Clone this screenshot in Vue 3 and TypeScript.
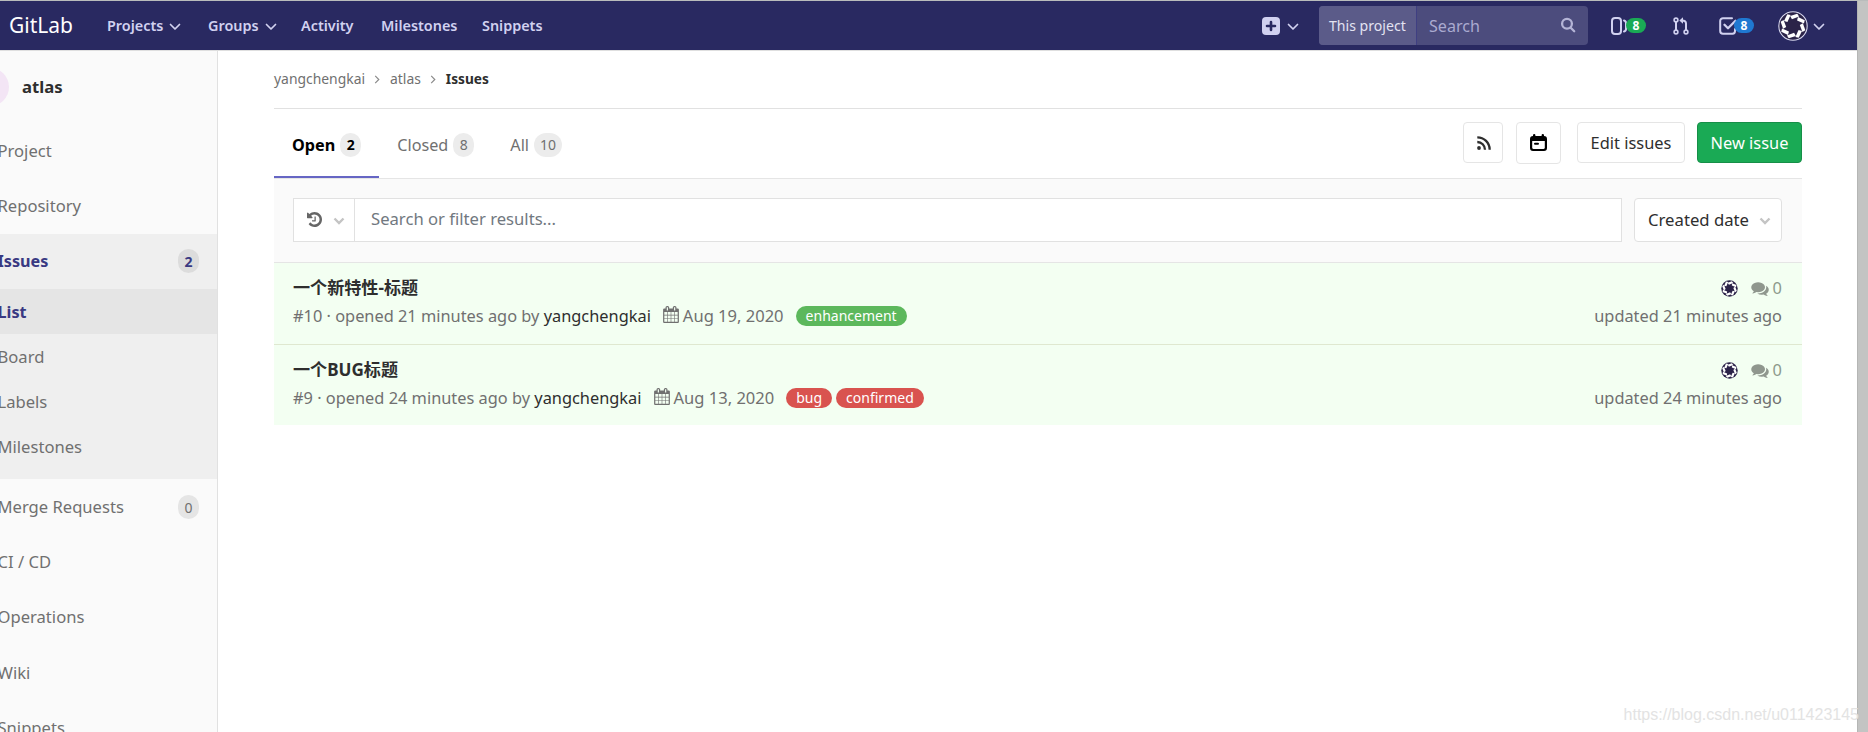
<script setup lang="ts">
interface NavLink { label: string; width: number; menu?: boolean }
interface SideItem { label: string; count?: number; active?: boolean; children?: { label: string; active?: boolean }[] }
interface Label { text: string; tone: 'green' | 'red' }
interface Issue { id: number; title: string; age: string; author: string; due: string; comments: number; labels: Label[] }

const navLinks: NavLink[] = [
  { label: 'Projects', width: 101, menu: true },
  { label: 'Groups', width: 93, menu: true },
  { label: 'Activity', width: 80 },
  { label: 'Milestones', width: 101 },
  { label: 'Snippets', width: 62 },
]

const sideItems: SideItem[] = [
  { label: 'Project' },
  { label: 'Repository' },
  {
    label: 'Issues',
    count: 2,
    active: true,
    children: [{ label: 'List', active: true }, { label: 'Board' }, { label: 'Labels' }, { label: 'Milestones' }],
  },
  { label: 'Merge Requests', count: 0 },
  { label: 'CI / CD' },
  { label: 'Operations' },
  { label: 'Wiki' },
  { label: 'Snippets' },
]

const tabs = [
  { label: 'Open', count: 2, active: true },
  { label: 'Closed', count: 8, active: false },
  { label: 'All', count: 10, active: false },
]

const issues: Issue[] = [
  { id: 10, title: '一个新特性-标题', age: '21 minutes ago', author: 'yangchengkai', due: 'Aug 19, 2020', comments: 0, labels: [{ text: 'enhancement', tone: 'green' }] },
  { id: 9, title: '一个BUG标题', age: '24 minutes ago', author: 'yangchengkai', due: 'Aug 13, 2020', comments: 0, labels: [{ text: 'bug', tone: 'red' }, { text: 'confirmed', tone: 'red' }] },
]

// Angles of the blades around the identicon's dark centre.
const blades = [0, 45, 90, 135, 180, 225, 270, 315]
</script>

<template>
  <div class="window">
    <div class="page">
      <header class="navbar">
        <span class="brand">GitLab</span>
        <nav class="nav-links">
          <a v-for="link in navLinks" :key="link.label" class="nav-link" :style="{ width: link.width + 'px' }">
            {{ link.label }}
            <svg v-if="link.menu" class="chev" viewBox="0 0 12 8"><path d="M1.5 1.5 6 6l4.500-4.500" /></svg>
          </a>
        </nav>
        <div class="nav-tools">
          <svg class="plus" viewBox="0 0 18 18">
            <rect width="18" height="18" rx="4" fill="#d1d1f0" />
            <path d="M9 5v8M5 9h8" stroke="#292961" stroke-width="2.6" stroke-linecap="round" />
          </svg>
          <svg class="chev plus-chev" viewBox="0 0 12 8"><path d="M1.5 1.5 6 6l4.500-4.500" /></svg>
          <div class="search">
            <span class="scope">This project</span>
            <span class="query">Search</span>
            <svg class="magnifier" viewBox="0 0 16 16"><circle cx="7" cy="6.800" r="4.900" /><path d="m10.700 10.700 3.500 3.500" /></svg>
          </div>
          <span class="counter issues-counter">
            <svg viewBox="0 0 18 18"><rect x="1" y="1" width="9" height="16" rx="3" /><path d="M13 3.500c1.600.4 2 1.200 2 2.500v6c0 1.300-.4 2.100-2 2.500" /></svg>
            <b class="badge green">8</b>
          </span>
          <svg class="merge" viewBox="0 0 16 18">
            <circle cx="3" cy="3" r="1.900" /><circle cx="3" cy="15" r="1.900" /><circle cx="13" cy="15" r="1.900" />
            <path d="M3 5v8M13 13V6.500C13 4.500 12 3.500 9 3.500" stroke-width="2" /><path class="solid" d="M10 .3v6.400L6.300 3.500z" />
          </svg>
          <span class="counter todo-counter">
            <svg viewBox="0 0 18 18"><path d="M13 1.200H4a2.800 2.800 0 0 0-2.800 2.800v10A2.800 2.800 0 0 0 4 16.800h9.500a2.800 2.800 0 0 0 2.500-2.800v-2" /><path d="m5.500 7.800 3.500 3.500 7.500-7.500" stroke-width="2.300" /></svg>
            <b class="badge blue">8</b>
          </span>
          <svg class="user" viewBox="0 0 30 30">
            <circle cx="15" cy="15" r="14.200" fill="#2b2348" stroke="#d9d9ef" stroke-width="1.100" />
            <path v-for="a in blades" :key="a" :transform="`rotate(${a + 8} 15 15)`" d="M10.800 5.600 17.500 2.200l2.200 2.600-6.700 3.600z" fill="#fff" />
          </svg>
          <svg class="chev user-chev" viewBox="0 0 12 8"><path d="M1.5 1.5 6 6l4.500-4.500" /></svg>
        </div>
      </header>

      <div class="body">
        <aside class="sidebar">
          <div class="project"><i class="project-avatar"></i><strong>atlas</strong></div>
          <section v-for="item in sideItems" :key="item.label" :class="['side-section', { open: item.children }]">
            <a :class="['side-item', { active: item.active }]">
              <span>{{ item.label }}</span>
              <em v-if="item.count !== undefined" class="side-count">{{ item.count }}</em>
            </a>
            <a v-for="child in item.children" :key="child.label" :class="['side-child', { current: child.active }]">
              <span>{{ child.label }}</span>
            </a>
          </section>
        </aside>

        <main class="content">
          <div class="crumbs">
            <span>yangchengkai</span>
            <svg viewBox="0 0 6 10"><path d="m1 1 4 4-4 4" /></svg>
            <span>atlas</span>
            <svg viewBox="0 0 6 10"><path d="m1 1 4 4-4 4" /></svg>
            <strong>Issues</strong>
          </div>

          <div class="top">
            <div class="tabs">
              <a v-for="tab in tabs" :key="tab.label" :class="['tab', { active: tab.active }]">
                <span>{{ tab.label }}</span><em class="tab-count">{{ tab.count }}</em>
              </a>
            </div>
            <div class="actions">
              <button class="btn rss">
                <svg viewBox="0 0 14 14"><circle cx="2" cy="12" r="1.900" /><path d="M.3 6A7.700 7.700 0 0 1 8 13.700M.3 1.300A12.400 12.400 0 0 1 12.700 13.700" /></svg>
              </button>
              <button class="btn cal">
                <svg viewBox="0 0 17 17"><path fill-rule="evenodd" d="M3 1.200a1.200 1.200 0 0 1 2.400 0V2h6.200v-.8a1.200 1.200 0 0 1 2.400 0V2a3 3 0 0 1 3 3v9a3 3 0 0 1-3 3H3a3 3 0 0 1-3-3V5a3 3 0 0 1 3-3zM2.200 7v6.700c0 .7.500 1.200 1.200 1.200h10.200c.7 0 1.200-.5 1.200-1.200V7zM5 8.800h3a1 1 0 0 1 0 2H5a1 1 0 0 1 0-2" /></svg>
              </button>
              <button class="btn edit">Edit issues</button>
              <button class="btn new">New issue</button>
            </div>
          </div>

          <div class="filters">
            <div class="filter-box">
              <div class="history">
                <svg class="clock" viewBox="128 128 1536 1536"><path d="M1664 896q0 156-61 298t-164 245-245 164-298 61q-172 0-327-72.500t-264-204.500q-7-10-6.500-22.500t8.500-20.500l137-138q10-9 25-9 16 2 23 12 73 95 179 147t225 52q104 0 198.500-40.500t163.500-109.500 109.500-163.500 40.500-198.500-40.500-198.500-109.500-163.500-163.500-109.500-198.500-40.500q-98 0-188 35.500t-160 101.500l137 138q31 30 14 69-17 40-59 40h-448q-26 0-45-19t-19-45v-448q0-42 40-59 39-17 69 14l130 129q107-101 244.500-156.500t284.500-55.500q156 0 298 61t245 164 164 245 61 298zm-640-288v448q0 14-9 23t-23 9h-320q-14 0-23-9t-9-23v-64q0-14 9-23t23-9h224v-352q0-14 9-23t23-9h64q14 0 23 9t9 23z" /></svg>
                <svg class="drop" viewBox="0 0 12 8"><path d="M1.5 1.5 6 6l4.500-4.500" /></svg>
              </div>
              <span class="placeholder">Search or filter results...</span>
            </div>
            <div class="sort">
              <span>Created date</span>
              <svg class="drop" viewBox="0 0 12 8"><path d="M1.5 1.5 6 6l4.500-4.500" /></svg>
            </div>
          </div>

          <ul class="issues">
            <li v-for="issue in issues" :key="issue.id" class="issue">
              <div class="info">
                <strong class="title">{{ issue.title }}</strong>
                <div class="meta">
                  <span>#{{ issue.id }} · opened {{ issue.age }} by <b class="author">{{ issue.author }}</b></span>
                  <svg class="due-icon" viewBox="64 0 1664 1792"><path d="M192 1664h288v-288h-288v288zm352 0h320v-288h-320v288zm-352-352h288v-320h-288v320zm352 0h320v-320h-320v320zm-352-384h288v-288h-288v288zm736 736h320v-288h-320v288zm-384-736h320v-288h-320v288zm768 736h288v-288h-288v288zm-384-352h320v-320h-320v320zm-352-864v-288q0-13-9.500-22.500t-22.500-9.500h-64q-13 0-22.500 9.500t-9.500 22.500v288q0 13 9.500 22.500t22.500 9.500h64q13 0 22.500-9.500t9.500-22.500zm736 864h288v-320h-288v320zm-384-384h320v-288h-320v288zm384 0h288v-288h-288v288zm32-480v-288q0-13-9.500-22.500t-22.500-9.500h-64q-13 0-22.500 9.500t-9.500 22.500v288q0 13 9.500 22.500t22.500 9.500h64q13 0 22.500-9.500t9.500-22.500zm384-64v1280q0 52-38 90t-90 38h-1408q-52 0-90-38t-38-90v-1280q0-52 38-90t90-38h128v-96q0-66 47-113t113-47h64q66 0 113 47t47 113v96h384v-96q0-66 47-113t113-47h64q66 0 113 47t47 113v96h128q52 0 90 38t38 90z" /></svg>
                  <span class="due">{{ issue.due }}</span>
                  <span v-for="label in issue.labels" :key="label.text" :class="['label', label.tone]">{{ label.text }}</span>
                </div>
              </div>
              <div class="side">
                <div class="stats">
                  <svg class="assignee" viewBox="0 0 30 30">
                    <circle cx="15" cy="15" r="14.500" fill="#2b2348" />
                    <path v-for="a in blades" :key="a" :transform="`rotate(${a + 8} 15 15)`" d="M10.300 5.600 17.500 1.600l2.600 2.800-7 4z" fill="#fff" />
                  </svg>
                  <svg class="talk" viewBox="0 128 1792 1536"><path d="M1408 768q0 139-94 257t-256.500 186.500-353.500 68.500q-86 0-176-16-124 88-278 128-36 9-86 16h-3q-11 0-20.500-8t-11.500-21q-1-3-1-6.500t.5-6.500 2-6l2.500-5 3.500-5.500 4-5 4.500-5 4-4.500q5-6 23-25t26-29.500 22.500-29 25-38.500 20.500-44q-124-72-195-177t-71-224q0-139 94-257t256.500-186.500 353.500-68.500 353.500 68.500 256.500 186.500 94 257zm384 256q0 120-71 224.500t-195 176.500q10 24 20.500 44t25 38.500 22.500 29 26 29.500 23 25q1 1 4 4.500t4.500 5 4 5 3.500 5.500l2.500 5 2 6 .5 6.500-1 6.500q-3 14-13 22t-22 7q-50-7-86-16-154-40-278-128-90 16-176 16-271 0-472-132 58 4 88 4 161 0 309-45t264-129q125-92 192-212t67-254q0-77-23-152 129 71 204 178t75 230z" /></svg>
                  <span>{{ issue.comments }}</span>
                </div>
                <div class="updated">updated {{ issue.age }}</div>
              </div>
            </li>
          </ul>
        </main>
      </div>
    </div>
    <div class="gutter"></div>
    <div class="watermark">https://blog.csdn.net/u011423145</div>
  </div>
</template>

<style>
html, body { overflow: hidden; }
</style>

<style scoped>
.window {
  position: relative;
  display: flex;
  width: 1868px;
  height: 732px;
  box-sizing: border-box;
  border-top: 1px solid #b9bcbc;
  overflow: hidden;
  background: #fff;
  color: #707070;
  font: 16.4px/24px "Noto Sans", "Noto Sans CJK SC", sans-serif;
}
.window *, .window *::before { box-sizing: border-box; }
svg { display: block; flex: none; }
.page { display: flex; flex-direction: column; width: 1857px; }
.gutter { flex: 1; background: #c3c4c3; border-left: 1px solid #b5b6b5; }

.navbar { display: flex; align-items: center; height: 50px; flex: none; background: #292961; border-bottom: 1px solid #dfdfdf; padding-left: 9px; color: #d1d1f0; }
.brand { width: 98px; color: #fff; font-size: 21px; margin-top: -2px; }
.nav-links { display: flex; }
.nav-link { display: flex; align-items: center; font-size: 14.4px; font-weight: 600; }
.chev { width: 12px; height: 8px; margin-left: 6px; margin-top: 2px; fill: none; stroke: #d1d1f0; stroke-width: 1.7; stroke-linecap: round; stroke-linejoin: round; }
.nav-tools { display: flex; align-items: center; margin-left: auto; padding-right: 32px; }
.plus { width: 18px; height: 18px; }
.plus-chev { margin-left: 7px; margin-right: 20px; }
.search { display: flex; align-items: center; width: 269px; height: 39px; border-radius: 4px; background: #4c4c7d; overflow: hidden; margin-top: -1px; }
.scope { display: flex; align-items: center; width: 98px; height: 100%; padding: 2px 0 0 10px; background: #5b5b89; border-right: 1px solid #3f3f82; color: #e3e3f2; font-size: 14.1px; white-space: nowrap; }
.query { margin: 1px 0 0 12px; font-size: 16.1px; color: #aaaad0; }
.magnifier { width: 16px; height: 16px; margin-left: auto; margin-right: 12px; fill: none; stroke: #b4b4d6; stroke-width: 2.3; stroke-linecap: round; }
.counter { display: flex; align-items: center; }
.counter > svg { width: 18px; height: 18px; fill: none; stroke: #d1d1f0; stroke-width: 2; stroke-linecap: round; stroke-linejoin: round; }
.issues-counter { margin-left: 23px; }
.badge { width: 20px; height: 15px; border-radius: 8px; margin-left: -3px; margin-right: 1px; color: #fff; font-size: 12px; line-height: 15px; text-align: center; position: relative; }
.green { background: #1aaa55; }
.blue { background: #1f78d1; }
.merge { width: 16px; height: 18px; margin-left: 26px; fill: none; stroke: #d1d1f0; stroke-width: 1.6; }
.merge .solid { fill: #d1d1f0; stroke: none; }
.todo-counter { margin-left: 30px; }
.user { width: 30px; height: 30px; margin-left: 23px; }
.user-chev { margin-left: 5px; }

.body { display: flex; flex: 1; min-height: 0; }
.sidebar { width: 218px; height: 681px; flex: none; background: #fafafa; border-right: 1px solid #e1e1e1; overflow: hidden; font-size: 16.6px; }
.project { display: flex; align-items: center; height: 72px; color: #2e2e2e; font-size: 16.7px; }
.project strong { font-weight: 700; margin-left: 13px; }
.project-avatar { width: 38px; height: 38px; border-radius: 50%; background: #f3e5f5; margin-left: -29px; }
.side-section { margin-right: -1px; padding-right: 1px; }
.side-item { display: flex; align-items: center; justify-content: space-between; height: 55.4px; padding-right: 18px; }
.side-item span, .side-child span { margin-left: -2.5px; white-space: nowrap; }
.side-section.open { background: #efefef; padding-bottom: 9px; border-right: 1px solid #dcdcdc; padding-right: 0; }
.side-item.active, .side-child.current { color: #393982; font-weight: 700; font-size: 16.2px; }
.side-child { display: flex; align-items: center; height: 45.2px; }
.side-child.current { background: #e5e5e5; }
.side-count { width: 21px; height: 24px; border-radius: 11px; background: #e5e5e5; font-style: normal; font-size: 14px; line-height: 25px; text-align: center; }
.active .side-count { background: #dcdcdc; }

.content { width: 1528px; margin-left: 56px; }
.crumbs { display: flex; align-items: center; height: 58px; padding-bottom: 2px; border-bottom: 1px solid #e1e1e1; font-size: 13.9px; }
.crumbs svg { width: 6px; height: 9px; margin: 1px 10px 0 9px; fill: none; stroke: #8a8a8a; stroke-width: 1.3; }
.crumbs strong { color: #2e2e2e; font-weight: 700; font-size: 13.7px; }
.top { display: flex; justify-content: space-between; height: 70px; border-bottom: 1px solid #e5e5e5; }
.tabs { display: flex; height: 69px; }
.tab { display: flex; align-items: center; padding: 4px 18px 0; border-bottom: 2px solid transparent; font-size: 16.2px; }
.tab.active { color: #000; font-weight: 700; border-color: #6666c4; }
.tab-count { min-width: 21px; height: 24px; padding: 0 6px; border-radius: 12px; background: #ececec; margin-left: 5px; font-style: normal; font-size: 14px; line-height: 24px; text-align: center; }
.actions { display: flex; align-items: flex-start; padding-top: 13px; }
.btn { display: flex; align-items: center; justify-content: center; height: 41px; padding: 0; border: 1px solid #e5e5e5; border-radius: 4px; background: #fff; color: #2e2e2e; font: 16.4px/24px "Noto Sans", sans-serif; white-space: nowrap; }
.rss { width: 40px; }
.rss svg { width: 14px; height: 14px; margin-left: 2px; fill: #2e2e2e; }
.rss path { fill: none; stroke: #2e2e2e; stroke-width: 2.3; }
.cal { width: 45px; height: 42px; margin-left: 13px; }
.cal svg { width: 17px; height: 17px; fill: #000; margin-top: -2px; }
.edit { width: 108px; margin-left: 16px; }
.new { width: 105px; margin-left: 12px; background: #1aaa55; border-color: #168f48; color: #fff; }

.filters { display: flex; height: 84px; padding: 19px 20px 0 19px; background: #fafafa; border-bottom: 1px solid #e5e5e5; }
.filter-box { display: flex; align-items: center; width: 1329px; height: 44px; border: 1px solid #e1e1e1; background: #fff; }
.history { display: flex; align-items: center; width: 61px; height: 100%; padding-left: 13px; border-right: 1px solid #e1e1e1; }
.clock { width: 15px; height: 15px; margin-top: -1px; fill: #666; }
.drop { width: 12px; height: 8px; margin-top: 2px; fill: none; stroke: #c4c4c4; stroke-width: 2.4; }
.history .drop { margin-left: 11px; }
.placeholder { margin-left: 16px; margin-top: -2px; font-size: 16.65px; color: #717880; }
.sort { display: flex; align-items: center; justify-content: space-between; width: 148px; height: 44px; margin-left: 12px; padding: 0 10px 0 13px; border: 1px solid #e1e1e1; border-radius: 4px; background: #fff; color: #2e2e2e; font-size: 16.7px; }

.issues { margin: 0; padding: 0; list-style: none; }
.issue { display: flex; justify-content: space-between; height: 81px; padding: 12px 20px 0 19px; background: #f3fff2; }
.issue + .issue { border-top: 1px solid #dfe8d0; }
.title { display: block; height: 29px; color: #2e2e2e; font-weight: 700; font-size: 17.1px; line-height: 26px; }
.meta { display: flex; align-items: center; font-size: 16.38px; white-space: nowrap; }
.author { color: #2e2e2e; font-weight: 400; }
.due-icon { width: 16px; height: 17px; margin: -3px 4px 0 12px; fill: #707070; }
.due { font-size: 16.55px; margin-right: 8px; }
.label { height: 20px; margin: -1px 0 0 4px; padding: 0 10px; border-radius: 10px; color: #fff; font-size: 14px; line-height: 20px; }
.label.green { background: #5cb85c; }
.label.red { background: #d9534f; }
.side { text-align: right; }
.stats { display: flex; align-items: center; justify-content: flex-end; height: 28px; padding-bottom: 2px; color: #8d9a8c; }
.assignee { width: 17px; height: 17px; }
.talk { width: 18px; height: 15px; margin: 0 4px 0 13px; fill: #8f978e; }
.updated { font-size: 16.35px; margin-top: 1px; }

.watermark { position: absolute; right: 9px; bottom: 5px; color: #e3e3e3; font: 16px/24px "Liberation Sans", sans-serif; }
</style>
